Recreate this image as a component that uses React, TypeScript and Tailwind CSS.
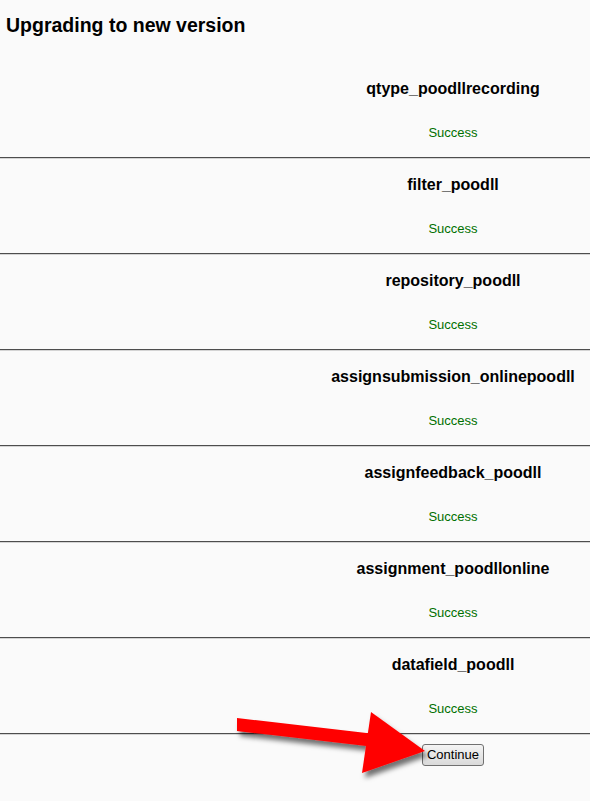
import React from "react";

const items = [
  "qtype_poodllrecording",
  "filter_poodll",
  "repository_poodll",
  "assignsubmission_onlinepoodll",
  "assignfeedback_poodll",
  "assignment_poodllonline",
  "datafield_poodll",
];

function Rule() {
  return (
    <div>
      <div className="h-px bg-[#4d4d4d]" />
      <div className="h-px bg-[#d4d4d4]" />
    </div>
  );
}

export default function App() {
  return (
    <div
      className="relative w-[590px] h-[801px] bg-[#fafafa] overflow-hidden text-black"
      style={{ fontFamily: '"Liberation Sans", Arial, sans-serif' }}
    >
      <h1 className="pt-[13px] pl-[6px] text-[19.5px] leading-[24px] font-bold">
        Upgrading to new version
      </h1>
      <div className="mt-[42px]">
        {items.map((name, i) => (
          <div key={name}>
            {i > 0 && <Rule />}
            <div className={`pl-[316px] text-center ${i > 0 ? "pt-[16px]" : ""}`}>
              <div className="text-[16px] leading-[20px] font-bold">{name}</div>
              <div className="mt-[26px] mb-[16px] text-[13px] leading-[16px] text-[#007000]">
                Success
              </div>
            </div>
          </div>
        ))}
        <Rule />
        <div className="pl-[316px] pt-[9px] flex justify-center">
          <button className="h-[22px] px-[4px] text-[13px] leading-[20px] border border-[#707070] rounded-[3px] bg-gradient-to-b from-[#f4f4f4] to-[#dadada] text-black">
            Continue
          </button>
        </div>
      </div>
      <svg
        className="absolute left-0 top-0 pointer-events-none"
        width="590"
        height="801"
        viewBox="0 0 590 801"
      >
        <defs>
          <filter id="sh" x="-20%" y="-20%" width="140%" height="160%">
            <feDropShadow dx="3" dy="5" stdDeviation="2.5" floodColor="#000" floodOpacity="0.55" />
          </filter>
        </defs>
        <g filter="url(#sh)" fill="#ff0000">
          <polygon points="237,718 375,734 375,747 237,731" />
          <polygon points="371,712 362,773 425,751" />
        </g>
      </svg>
    </div>
  );
}
